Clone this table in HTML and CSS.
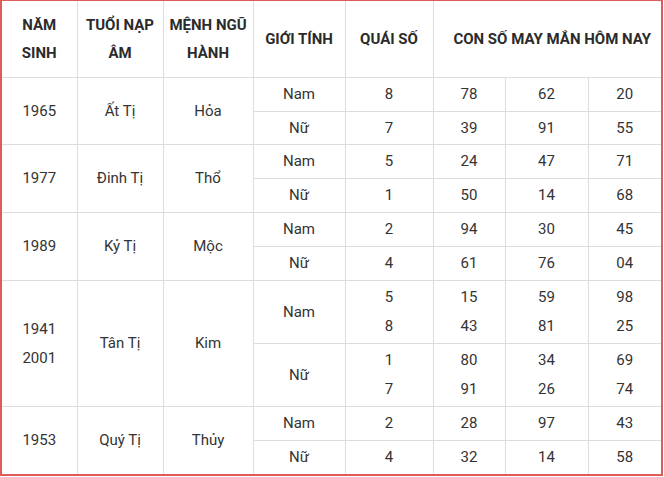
FILE: index.html
```html
<!DOCTYPE html>
<html lang="vi">
<head>
<meta charset="utf-8">
<link rel="stylesheet" href="styles.css">
</head>
<body>
<div class="frame">
<table class="lucky">
<colgroup>
<col class="c1"><col class="c2"><col class="c3"><col class="c4"><col class="c5"><col class="c6"><col class="c7"><col class="c8">
</colgroup>
<thead>
<tr>
<th>NĂM<br>SINH</th>
<th>TUỔI NẠP<br>ÂM</th>
<th>MỆNH NGŨ<br>HÀNH</th>
<th>GIỚI TÍNH</th>
<th>QUÁI SỐ</th>
<th colspan="3" class="lucky-head">CON SỐ MAY MẮN HÔM NAY</th>
</tr>
</thead>
<tbody>
<tr><td rowspan="2">1965</td><td rowspan="2">Ất Tị</td><td rowspan="2">Hỏa</td><td>Nam</td><td>8</td><td>78</td><td>62</td><td>20</td></tr>
<tr class="short"><td>Nữ</td><td>7</td><td>39</td><td>91</td><td>55</td></tr>
<tr><td rowspan="2">1977</td><td rowspan="2">Đinh Tị</td><td rowspan="2">Thổ</td><td>Nam</td><td>5</td><td>24</td><td>47</td><td>71</td></tr>
<tr><td>Nữ</td><td>1</td><td>50</td><td>14</td><td>68</td></tr>
<tr><td rowspan="2">1989</td><td rowspan="2">Kỷ Tị</td><td rowspan="2">Mộc</td><td>Nam</td><td>2</td><td>94</td><td>30</td><td>45</td></tr>
<tr><td>Nữ</td><td>4</td><td>61</td><td>76</td><td>04</td></tr>
<tr><td rowspan="2">1941<br>2001</td><td rowspan="2">Tân Tị</td><td rowspan="2">Kim</td><td>Nam</td><td>5<br>8</td><td>15<br>43</td><td>59<br>81</td><td>98<br>25</td></tr>
<tr><td>Nữ</td><td>1<br>7</td><td>80<br>91</td><td>34<br>26</td><td>69<br>74</td></tr>
<tr><td rowspan="2">1953</td><td rowspan="2">Quý Tị</td><td rowspan="2">Thủy</td><td>Nam</td><td>2</td><td>28</td><td>97</td><td>43</td></tr>
<tr><td>Nữ</td><td>4</td><td>32</td><td>14</td><td>58</td></tr>
</tbody>
</table>
</div>
</body>
</html>
```

FILE: styles.css
```css
html, body {
  margin: 0;
  padding: 0;
  background: #ffffff;
}

.frame {
  width: 659px;
  border: 2px solid #e25b5b;
  border-top-width: 1px;
  background: #ffffff;
}

.lucky {
  width: 659px;
  border-collapse: collapse;
  table-layout: fixed;
  border-style: hidden;
  font-family: Roboto, "Liberation Sans", sans-serif;
  font-size: 15px;
  color: #333333;
}

.c1 { width: 75px; }
.c2 { width: 86px; }
.c3 { width: 90px; }
.c4 { width: 92px; }
.c5 { width: 88px; }
.c6 { width: 72px; }
.c7 { width: 83px; }
.c8 { width: 73px; }

.lucky th,
.lucky td {
  border: 1px solid #dddddd;
  text-align: center;
  vertical-align: middle;
  white-space: nowrap;
  padding: 0;
}

.lucky th {
  font-weight: 700;
  color: #2b2b2b;
  line-height: 28px;
  padding: 10px 0 10px;
}

.lucky .lucky-head {
  padding-left: 10px;
}

.lucky td {
  line-height: 29px;
  padding: 2px 0 2px;
}

.lucky .short td {
  padding-bottom: 1px;
}
```
